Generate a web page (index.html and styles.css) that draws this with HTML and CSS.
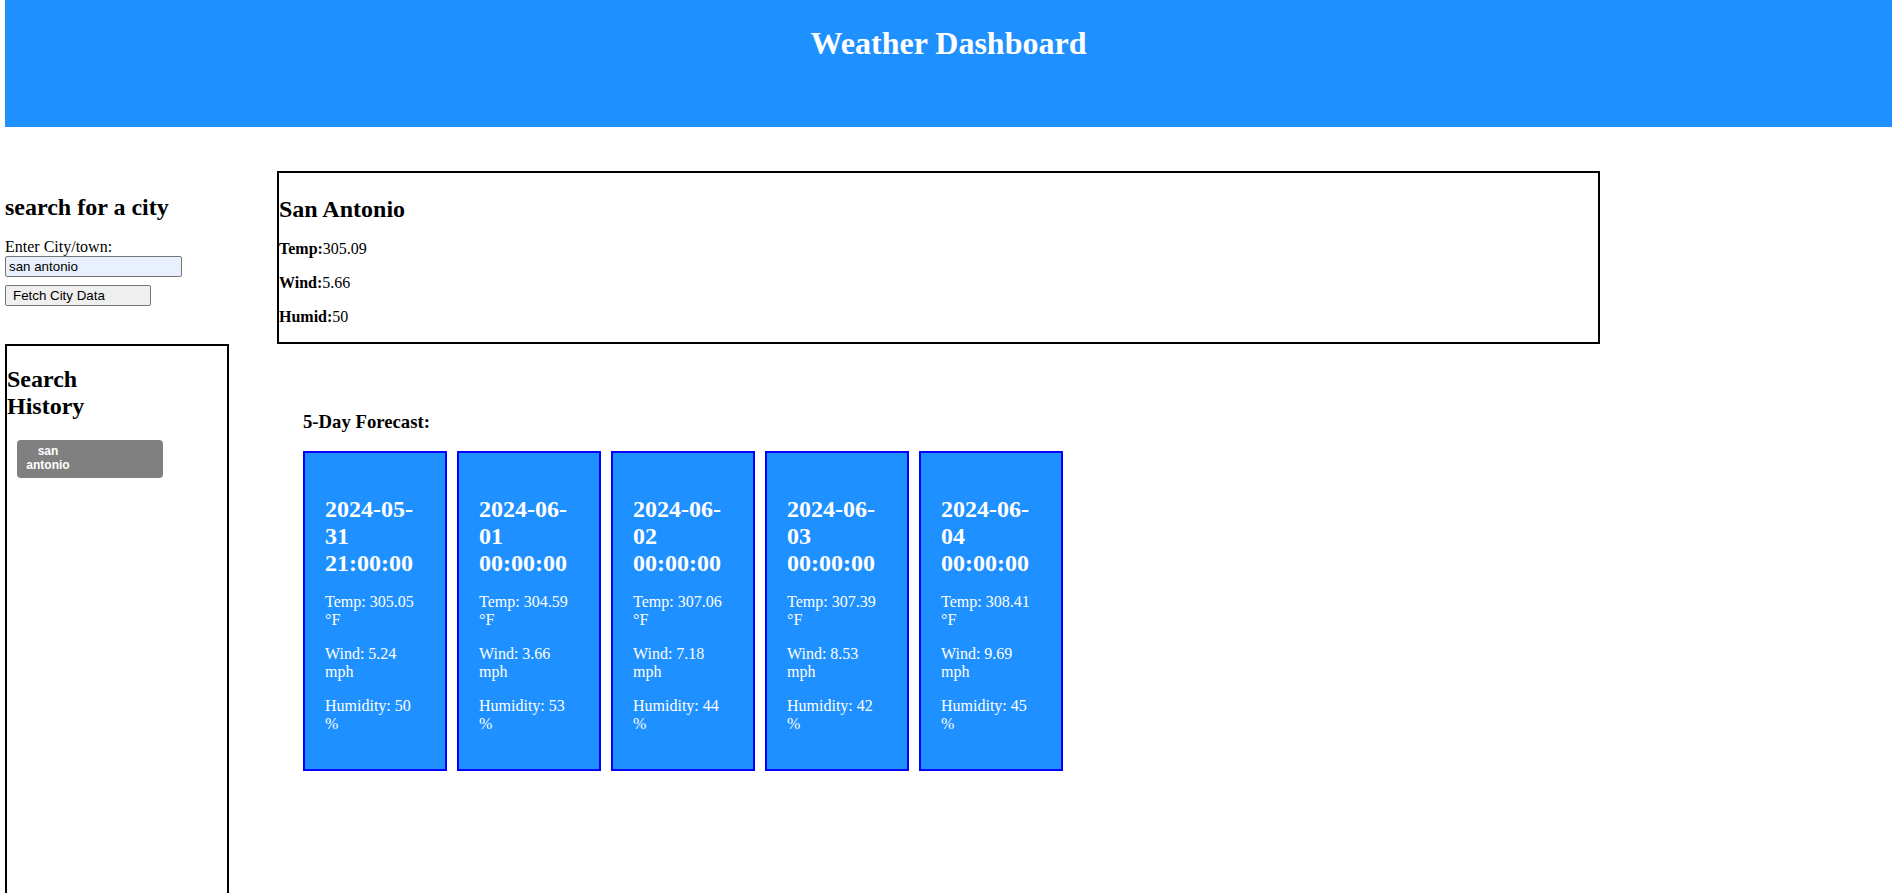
FILE: index.html
```html
<!DOCTYPE html>
<html lang="en">
<head>
<meta charset="utf-8">
<title>Weather Dashboard</title>
<link rel="stylesheet" href="styles.css">
</head>
<body>
<header class="top-bar">
  <h1 class="title">Weather Dashboard</h1>
</header>
<div class="layout">
  <aside class="sidebar">
    <h2 class="side-heading">search for a city</h2>
    <label class="city-label" for="city">Enter City/town:</label>
    <input class="city-input" id="city" type="text" value="san antonio">
    <button class="fetch-btn" type="button">Fetch City Data</button>
    <section class="history">
      <h2 class="history-heading">Search History</h2>
      <button class="history-btn" type="button">san antonio</button>
    </section>
  </aside>
  <main class="content">
    <section class="current">
      <h2 class="city-name">San Antonio</h2>
      <p class="stat"><b>Temp:</b>305.09</p>
      <p class="stat"><b>Wind:</b>5.66</p>
      <p class="stat"><b>Humid:</b>50</p>
    </section>
    <section class="forecast">
      <h3 class="forecast-title">5-Day Forecast:</h3>
      <div class="cards">
        <div class="card">
          <h2 class="card-date">2024-05-31 21:00:00</h2>
          <p class="card-line">Temp: 305.05 °F</p>
          <p class="card-line">Wind: 5.24 mph</p>
          <p class="card-line">Humidity: 50 %</p>
        </div>
        <div class="card">
          <h2 class="card-date">2024-06-01 00:00:00</h2>
          <p class="card-line">Temp: 304.59 °F</p>
          <p class="card-line">Wind: 3.66 mph</p>
          <p class="card-line">Humidity: 53 %</p>
        </div>
        <div class="card">
          <h2 class="card-date">2024-06-02 00:00:00</h2>
          <p class="card-line">Temp: 307.06 °F</p>
          <p class="card-line">Wind: 7.18 mph</p>
          <p class="card-line">Humidity: 44 %</p>
        </div>
        <div class="card">
          <h2 class="card-date">2024-06-03 00:00:00</h2>
          <p class="card-line">Temp: 307.39 °F</p>
          <p class="card-line">Wind: 8.53 mph</p>
          <p class="card-line">Humidity: 42 %</p>
        </div>
        <div class="card">
          <h2 class="card-date">2024-06-04 00:00:00</h2>
          <p class="card-line">Temp: 308.41 °F</p>
          <p class="card-line">Wind: 9.69 mph</p>
          <p class="card-line">Humidity: 45 %</p>
        </div>
      </div>
    </section>
  </main>
</div>
</body>
</html>
```

FILE: styles.css
```css
html, body {
  margin: 0;
  background: #ffffff;
}
body {
  padding-left: 5px;
  font-family: "Liberation Serif", "Times New Roman", serif;
  font-size: 16px;
  color: #000000;
}
.top-bar {
  height: 127px;
  box-sizing: border-box;
  padding-top: 25px;
  background: #1e90ff;
  text-align: center;
}
.title {
  margin: 0;
  font-size: 32px;
  font-weight: bold;
  color: #ffffff;
}
.layout {
  display: grid;
  grid-template-columns: 224px 1323px;
  column-gap: 48px;
  align-items: start;
  margin-top: 44px;
}
.sidebar {
  display: flow-root;
}
.side-heading {
  font-size: 24px;
  margin: 23px 0 17px;
}
.city-label {
  display: block;
}
.city-input {
  display: block;
  box-sizing: border-box;
  width: 177px;
  height: 21px;
  margin: 0;
  padding: 1px 3px;
  border: 1px solid #767676;
  border-radius: 2px;
  background: #e8f0fe;
  font-family: "Liberation Sans", Arial, sans-serif;
  font-size: 13.33px;
  color: #000000;
}
.fetch-btn {
  display: block;
  box-sizing: border-box;
  width: 146px;
  height: 21px;
  margin: 8px 0 0;
  padding: 0 0 0 7px;
  border: 1px solid #767676;
  border-radius: 2px;
  background: #efefef;
  text-align: left;
  font-family: "Liberation Sans", Arial, sans-serif;
  font-size: 13.33px;
  color: #000000;
}
.history {
  margin-top: 38px;
  box-sizing: border-box;
  height: 620px;
  border: 2px solid #000000;
  display: flow-root;
}
.history-heading {
  width: 110px;
  font-size: 24px;
  margin: 20px 0;
}
.history-btn {
  display: block;
  box-sizing: border-box;
  width: 146px;
  margin: 0 0 0 10px;
  padding: 5px 93px 5px 9px;
  border: none;
  border-radius: 4px;
  background: #808080;
  color: #ffffff;
  font-family: "Liberation Sans", Arial, sans-serif;
  font-size: 12px;
  font-weight: bold;
  text-align: center;
  line-height: 13.8px;
}
.content {
  display: flow-root;
}
.current {
  border: 2px solid #000000;
  display: flow-root;
}
.city-name {
  font-size: 24px;
  margin: 23px 0 17px;
}
.stat {
  margin: 16px 0;
}
.forecast {
  display: flow-root;
  margin-top: 48px;
  padding-left: 26px;
}
.forecast-title {
  font-size: 18.72px;
  margin: 18.72px 0;
}
.cards {
  display: flex;
  gap: 10px;
  align-items: flex-start;
}
.card {
  box-sizing: border-box;
  width: 144px;
  padding: 20px;
  border: 2px solid #0000ff;
  background: #1e90ff;
  color: #ffffff;
}
.card-date {
  font-size: 24px;
  margin: 23px 0 0;
}
.card-line {
  margin: 16px 0;
}
```
